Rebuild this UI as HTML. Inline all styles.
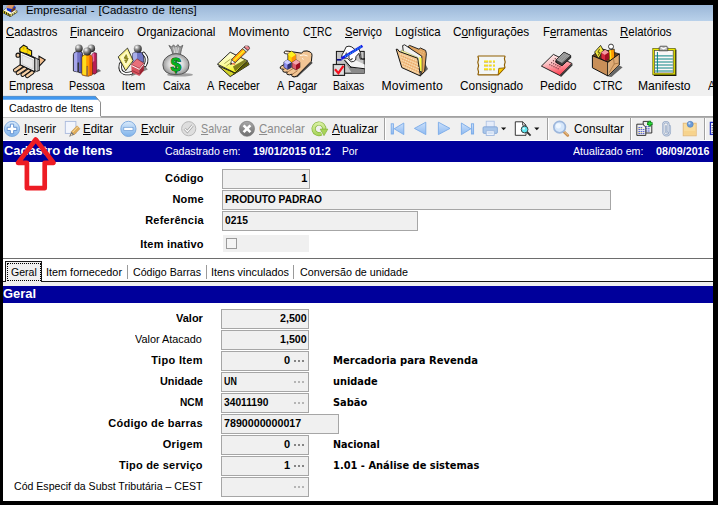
<!DOCTYPE html>
<html lang="pt-BR">
<head>
<meta charset="utf-8">
<title>Empresarial - [Cadastro de Itens]</title>
<style>
html,body{margin:0;padding:0;background:#000;}
body{width:718px;height:505px;overflow:hidden;position:relative;font-family:'Liberation Sans',sans-serif;}
#win{position:absolute;left:3px;top:5px;width:710px;height:496px;background:#fff;overflow:hidden;}
#page{position:absolute;left:-3px;top:-5px;width:718px;height:505px;}
.abs{position:absolute;}
.t{position:absolute;white-space:pre;line-height:16px;font-size:12px;color:#000;transform-origin:0 0;}
.t u{text-decoration:underline;text-underline-offset:1px;}
#title{left:3px;top:5px;width:710px;height:16px;background:linear-gradient(#9bb7d8,#b9d1ea);}
#menubar{left:3px;top:21px;width:710px;height:75px;background:#f0f0f0;}
#tabstrip{left:3px;top:96px;width:710px;height:21px;background:#fff;}
#tabline{left:100px;top:116px;width:613px;height:2px;background:linear-gradient(#a2a2a2 0,#a2a2a2 65%,#d0d0d0 100%);}
#tabline2{left:3px;top:117px;width:98px;height:1px;background:#c4c4c4;}
#tool2{left:3px;top:118px;width:710px;height:22px;background:#f0f0f0;}
.sep{position:absolute;top:118px;width:1px;height:22px;background:#a0a0a0;box-shadow:1px 0 0 #fff;}
.hdr{position:absolute;left:3px;width:710px;background:#00009b;}
.fld{position:absolute;box-sizing:border-box;height:20px;background:#f0f0f0;border:1px solid #a6a6a6;}
.dots{position:absolute;width:10px;height:2px;background:repeating-linear-gradient(90deg,#858585 0,#858585 2px,transparent 2px,transparent 4px);}
</style>
</head>
<body>
<div id="win"><div id="page">
<div class="abs" id="title"></div>
<div class="abs" id="menubar"></div>
<div class="abs" id="tabstrip"></div>
<div class="abs" id="tabline"></div>
<div class="abs" id="tabline2"></div>
<svg class="abs" style="left:0;top:90px" width="120" height="30" viewBox="0 90 120 30">
<polygon points="3,96 95.500,96 100.500,102 100.500,117 3,117" fill="#fff"/>
<polygon points="3,96 95.500,96 98.700,99.800 3,99.800" fill="#3f97f0"/>
<path d="M3,96.300H95.300" stroke="#6f8fb0" stroke-width="0.600" fill="none"/>
<path d="M95.300,96.200L100.500,102.200V116" stroke="#8c8c8c" stroke-width="1" fill="none"/>
</svg>
<div class="abs" id="tool2"></div>
<div class="sep" style="left:384px"></div>
<div class="sep" style="left:547px"></div>
<div class="sep" style="left:630px"></div>
<div class="sep" style="left:704px"></div>
<div class="hdr" style="top:141px;height:21px"></div>
<!-- top form -->
<div class="fld" style="left:222px;top:169px;width:88px"></div>
<div class="fld" style="left:222px;top:190px;width:389px"></div>
<div class="fld" style="left:222px;top:211px;width:196px"></div>
<div class="abs" style="left:223px;top:235px;width:86px;height:17px;background:#f0f0f0"></div>
<div class="abs" style="left:226px;top:238px;width:11px;height:11px;box-sizing:border-box;border:1px solid #9a9a9a;background:#f4f4f4"></div>
<!-- tab row -->
<div class="abs" style="left:3px;top:258px;width:710px;height:1px;background:#6d6d6d"></div>
<div class="abs" style="left:3px;top:282px;width:710px;height:4px;background:#f0f0f0"></div>
<div class="abs" style="left:3px;top:281px;width:710px;height:1px;background:#1a1a1a"></div>
<div class="abs" style="left:5px;top:261px;width:37px;height:21px;box-sizing:border-box;border:1px solid #1a1a1a;border-bottom:none;background:#f0f0f0"></div>
<div class="abs" style="left:7px;top:263px;width:34px;height:18px;box-sizing:border-box;border:1px dotted #000"></div>
<div class="abs" style="left:127px;top:265px;width:1px;height:14px;background:#9a9a9a"></div>
<div class="abs" style="left:206px;top:265px;width:1px;height:14px;background:#9a9a9a"></div>
<div class="abs" style="left:293px;top:265px;width:1px;height:14px;background:#9a9a9a"></div>
<div class="hdr" style="top:286px;height:17px"></div>
<!-- lower form -->
<div class="fld" style="left:221px;top:309px;width:88px"></div>
<div class="fld" style="left:221px;top:330px;width:88px"></div>
<div class="fld" style="left:221px;top:351px;width:88px"></div>
<div class="dots" style="left:294px;top:360px"></div>
<div class="fld" style="left:221px;top:372px;width:88px"></div>
<div class="dots" style="left:294px;top:381px;opacity:0.55"></div>
<div class="fld" style="left:221px;top:393px;width:88px"></div>
<div class="dots" style="left:294px;top:402px;opacity:0.55"></div>
<div class="fld" style="left:221px;top:414px;width:118px"></div>
<div class="fld" style="left:221px;top:435px;width:88px"></div>
<div class="dots" style="left:294px;top:444px"></div>
<div class="fld" style="left:221px;top:456px;width:88px"></div>
<div class="dots" style="left:294px;top:465px"></div>
<div class="fld" style="left:221px;top:477px;width:88px"></div>
<div class="dots" style="left:294px;top:486px;opacity:0.55"></div>

<span class="t" style="left:26.00px;top:1.88px;font-size:11.6px;word-spacing:0.8px;transform:scaleX(0.9843);">Empresarial - [Cadastro de Itens]</span>
<span class="t" style="left:6.30px;top:23.77px;font-size:12.2px;transform:scaleX(0.9235);"><u>C</u>adastros</span>
<span class="t" style="left:70.20px;top:23.77px;font-size:12.2px;transform:scaleX(0.9454);"><u>F</u>inanceiro</span>
<span class="t" style="left:137.30px;top:23.77px;font-size:12.2px;transform:scaleX(0.9631);">Organizacional</span>
<span class="t" style="left:228.40px;top:23.77px;font-size:12.2px;letter-spacing:0.161px;">Movimento</span>
<span class="t" style="left:302.80px;top:23.77px;font-size:12.2px;transform:scaleX(0.8535);">C<u>T</u>RC</span>
<span class="t" style="left:344.50px;top:23.77px;font-size:12.2px;transform:scaleX(0.9080);"><u>S</u>erviço</span>
<span class="t" style="left:394.70px;top:23.77px;font-size:12.2px;transform:scaleX(0.9348);">Logística</span>
<span class="t" style="left:453.30px;top:23.77px;font-size:12.2px;transform:scaleX(0.9695);">C<u>o</u>nfigurações</span>
<span class="t" style="left:542.50px;top:23.77px;font-size:12.2px;transform:scaleX(0.9335);">F<u>e</u>rramentas</span>
<span class="t" style="left:619.50px;top:23.77px;font-size:12.2px;transform:scaleX(0.9385);"><u>R</u>elatórios</span>
<span class="t" style="left:8.70px;top:77.77px;font-size:12.2px;transform:scaleX(0.9040);">Empresa</span>
<span class="t" style="left:69.00px;top:77.77px;font-size:12.2px;transform:scaleX(0.8806);">Pessoa</span>
<span class="t" style="left:121.50px;top:77.77px;font-size:12.2px;letter-spacing:0.066px;">Item</span>
<span class="t" style="left:163.40px;top:77.77px;font-size:12.2px;transform:scaleX(0.8694);">Caixa</span>
<span class="t" style="left:207.00px;top:77.77px;font-size:12.2px;word-spacing:1.6px;transform:scaleX(0.9005);">A Receber</span>
<span class="t" style="left:276.50px;top:77.77px;font-size:12.2px;word-spacing:1.6px;transform:scaleX(0.8916);">A Pagar</span>
<span class="t" style="left:333.40px;top:77.77px;font-size:12.2px;transform:scaleX(0.8526);">Baixas</span>
<span class="t" style="left:381.40px;top:77.77px;font-size:12.2px;letter-spacing:0.224px;">Movimento</span>
<span class="t" style="left:459.60px;top:77.77px;font-size:12.2px;transform:scaleX(0.9714);">Consignado</span>
<span class="t" style="left:539.50px;top:77.77px;font-size:12.2px;transform:scaleX(0.9617);">Pedido</span>
<span class="t" style="left:592.70px;top:77.77px;font-size:12.2px;transform:scaleX(0.8713);">CTRC</span>
<span class="t" style="left:638.30px;top:77.77px;font-size:12.2px;transform:scaleX(0.9954);">Manifesto</span>
<span class="t" style="left:707.60px;top:77.77px;font-size:12.2px;transform:scaleX(0.8980);">Ag</span>
<span class="t" style="left:8.50px;top:100.19px;font-size:11px;transform:scaleX(0.9707);">Cadastro de Itens</span>
<span class="t" style="left:24.00px;top:120.77px;font-size:12.2px;transform:scaleX(0.9446);"><u>I</u>nserir</span>
<span class="t" style="left:83.00px;top:120.77px;font-size:12.2px;transform:scaleX(0.9421);"><u>E</u>ditar</span>
<span class="t" style="left:140.50px;top:120.77px;font-size:12.2px;transform:scaleX(0.9158);"><u>E</u>xcluir</span>
<span class="t" style="left:201.30px;top:120.77px;font-size:12.2px;color:#8c8c8c;transform:scaleX(0.8829);"><u>S</u>alvar</span>
<span class="t" style="left:259.40px;top:120.77px;font-size:12.2px;color:#8c8c8c;transform:scaleX(0.9389);"><u>C</u>ancelar</span>
<span class="t" style="left:332.00px;top:120.77px;font-size:12.2px;transform:scaleX(0.9700);"><u>A</u>tualizar</span>
<span class="t" style="left:574.00px;top:120.77px;font-size:12.2px;transform:scaleX(0.9584);">Consultar</span>
<span class="t" style="left:3.50px;top:142.89px;font-size:13.3px;font-weight:700;color:#fff;transform:scaleX(0.9724);">Cadastro de Itens</span>
<span class="t" style="left:164.50px;top:143.19px;font-size:11px;color:#fff;transform:scaleX(0.9647);">Cadastrado em:</span>
<span class="t" style="left:253.40px;top:143.19px;font-size:11px;font-weight:700;color:#fff;transform:scaleX(0.9683);">19/01/2015 01:2</span>
<span class="t" style="left:342.00px;top:143.19px;font-size:11px;color:#fff;transform:scaleX(0.9343);">Por</span>
<span class="t" style="left:572.60px;top:143.19px;font-size:11px;color:#fff;transform:scaleX(0.9675);">Atualizado em:</span>
<span class="t" style="left:656.30px;top:143.19px;font-size:11px;font-weight:700;color:#fff;transform:scaleX(0.9716);">08/09/2016</span>
<span class="t" style="left:165.10px;top:170.49px;font-size:11px;font-weight:700;letter-spacing:0.122px;">Código</span>
<span class="t" style="left:172.40px;top:190.99px;font-size:11px;font-weight:700;letter-spacing:0.212px;">Nome</span>
<span class="t" style="left:145.20px;top:211.99px;font-size:11px;font-weight:700;letter-spacing:0.237px;">Referência</span>
<span class="t" style="left:140.20px;top:235.59px;font-size:11px;font-weight:700;letter-spacing:0.207px;">Item inativo</span>
<span class="t" style="left:301.18px;top:169.99px;font-size:11px;font-weight:700;">1</span>
<span class="t" style="left:224.70px;top:190.89px;font-size:11px;font-weight:700;transform:scaleX(0.9263);">PRODUTO PADRAO</span>
<span class="t" style="left:224.70px;top:212.09px;font-size:11px;font-weight:700;transform:scaleX(0.9353);">0215</span>
<span class="t" style="left:10.50px;top:263.69px;font-size:11px;transform:scaleX(0.9589);">Geral</span>
<span class="t" style="left:46.00px;top:263.69px;font-size:11px;transform:scaleX(0.9864);">Item fornecedor</span>
<span class="t" style="left:133.00px;top:263.69px;font-size:11px;transform:scaleX(0.9669);">Código Barras</span>
<span class="t" style="left:211.00px;top:263.69px;font-size:11px;transform:scaleX(0.9887);">Itens vinculados</span>
<span class="t" style="left:299.50px;top:263.69px;font-size:11px;transform:scaleX(0.9756);">Conversão de unidade</span>
<span class="t" style="left:3.40px;top:286.19px;font-size:13.3px;font-weight:700;color:#fff;transform:scaleX(0.9731);">Geral</span>
<span class="t" style="left:175.70px;top:310.09px;font-size:11px;font-weight:700;transform:scaleX(0.9998);">Valor</span>
<span class="t" style="left:135.20px;top:331.09px;font-size:11px;transform:scaleX(0.9869);">Valor Atacado</span>
<span class="t" style="left:151.20px;top:352.09px;font-size:11px;font-weight:700;letter-spacing:0.337px;">Tipo Item</span>
<span class="t" style="left:159.70px;top:373.09px;font-size:11px;font-weight:700;transform:scaleX(0.9883);">Unidade</span>
<span class="t" style="left:179.50px;top:394.09px;font-size:11px;font-weight:700;transform:scaleX(0.9217);">NCM</span>
<span class="t" style="left:108.30px;top:415.09px;font-size:11px;font-weight:700;letter-spacing:0.255px;">Código de barras</span>
<span class="t" style="left:162.80px;top:436.09px;font-size:11px;font-weight:700;letter-spacing:0.257px;">Origem</span>
<span class="t" style="left:119.00px;top:457.09px;font-size:11px;font-weight:700;letter-spacing:0.221px;">Tipo de serviço</span>
<span class="t" style="left:13.50px;top:478.09px;font-size:11px;transform:scaleX(0.9604);">Cód Especif da Subst Tributária – CEST</span>
<span class="t" style="left:280.10px;top:310.09px;font-size:11px;font-weight:700;transform:scaleX(0.9698);">2,500</span>
<span class="t" style="left:280.10px;top:331.09px;font-size:11px;font-weight:700;transform:scaleX(0.9698);">1,500</span>
<span class="t" style="left:283.88px;top:352.09px;font-size:11px;font-weight:700;">0</span>
<span class="t" style="left:223.50px;top:373.09px;font-size:11px;font-weight:700;transform:scaleX(0.8055);">UN</span>
<span class="t" style="left:223.50px;top:394.09px;font-size:11px;font-weight:700;transform:scaleX(0.9301);">34011190</span>
<span class="t" style="left:223.50px;top:415.09px;font-size:11px;font-weight:700;transform:scaleX(0.9707);">7890000000017</span>
<span class="t" style="left:283.88px;top:436.09px;font-size:11px;font-weight:700;">0</span>
<span class="t" style="left:283.88px;top:457.09px;font-size:11px;font-weight:700;">1</span>
<span class="t" style="left:333.40px;top:351.67px;font-size:10.5px;font-weight:700;font-family:'DejaVu Sans', 'Liberation Sans', sans-serif;transform:scaleX(0.9528);">Mercadoria para Revenda</span>
<span class="t" style="left:333.40px;top:372.67px;font-size:10.5px;font-weight:700;font-family:'DejaVu Sans', 'Liberation Sans', sans-serif;transform:scaleX(0.9331);">unidade</span>
<span class="t" style="left:333.40px;top:393.67px;font-size:10.5px;font-weight:700;font-family:'DejaVu Sans', 'Liberation Sans', sans-serif;transform:scaleX(0.9405);">Sabão</span>
<span class="t" style="left:333.40px;top:435.67px;font-size:10.5px;font-weight:700;font-family:'DejaVu Sans', 'Liberation Sans', sans-serif;transform:scaleX(0.9162);">Nacional</span>
<span class="t" style="left:333.40px;top:456.67px;font-size:10.5px;font-weight:700;font-family:'DejaVu Sans', 'Liberation Sans', sans-serif;transform:scaleX(0.9421);">1.01 - Análise de sistemas</span>
<svg class="abs" style="left:0;top:0" width="718" height="505" viewBox="0 0 718 505">
<defs>
<radialGradient id="gHead" cx="0.35" cy="0.3" r="0.8"><stop offset="0" stop-color="#fff"/><stop offset="0.4" stop-color="#8a8a8a"/><stop offset="1" stop-color="#111"/></radialGradient>
<radialGradient id="gBag" cx="0.5" cy="0.5" r="0.55"><stop offset="0" stop-color="#fffff4"/><stop offset="0.5" stop-color="#dcdcdc"/><stop offset="1" stop-color="#8a8a8a"/></radialGradient>
<linearGradient id="gBlueBtn" x1="0" y1="0" x2="0" y2="1"><stop offset="0" stop-color="#dcebfa"/><stop offset="0.5" stop-color="#a9cdf3"/><stop offset="1" stop-color="#7fb2ea"/></linearGradient>
<linearGradient id="gGrayBtn" x1="0" y1="0" x2="0" y2="1"><stop offset="0" stop-color="#a8a8a8"/><stop offset="1" stop-color="#6e6e6e"/></linearGradient>
<linearGradient id="gPink" x1="0" y1="0" x2="0.3" y2="1"><stop offset="0" stop-color="#fff4f4"/><stop offset="0.45" stop-color="#fbc4c6"/><stop offset="1" stop-color="#ff4a5a"/></linearGradient>
<linearGradient id="gNav" x1="0" y1="0" x2="0" y2="1"><stop offset="0" stop-color="#cfe2fa"/><stop offset="1" stop-color="#8cb9f2"/></linearGradient>
<linearGradient id="gPaper" x1="0.3" y1="0" x2="0.6" y2="1"><stop offset="0" stop-color="#ffffe0"/><stop offset="0.55" stop-color="#fbfb9a"/><stop offset="1" stop-color="#f2f200"/></linearGradient>
<linearGradient id="gGreen" gradientUnits="userSpaceOnUse" x1="0" y1="122" x2="0" y2="136"><stop offset="0" stop-color="#dcf2a8"/><stop offset="1" stop-color="#a4d254"/></linearGradient>
</defs>
<!-- title icon -->
<g>
<polygon points="3.200,10.300 7.500,7.300 17.300,10.600 17.300,12.400 10.500,17 3.200,13.200" fill="#222"/>
<polygon points="3.400,10.400 7.500,7.600 17,10.800 10.400,14.600" fill="#fffbd4"/>
<polygon points="3.400,10.600 10.300,14.400 10.500,16.600 3.400,12.900" fill="#f4e61a"/>
<path d="M4.600,11.300l0,2.300M6.400,12.300l0,2.300M8.200,13.200l0,2.400M9.900,14.200l0,2.300" stroke="#111" stroke-width="1"/>
<polygon points="10.500,14.600 17,10.900 16.800,12.200 10.600,16.600" fill="#f2ea7e"/>
<path d="M12.400,14l0,1.300M14.400,12.800l0,1.300" stroke="#333" stroke-width="0.800"/>
<polygon points="6.800,8.200 13.500,5 15.600,7 15.200,9.800 11.300,12.400 6.800,10.200" fill="#0a2ee6"/>
<polygon points="11.300,10 15.600,7 15.200,9.800 11.300,12.400" fill="#7a3a10"/>
<polygon points="6.300,6.200 8.500,5 14.300,5 12,9 7,8" fill="#d9986a"/>
<path d="M12,9l2.300,-4" stroke="#b87a20" stroke-width="0.800"/>
</g>
<!-- Empresa -->
<g>
<ellipse cx="18" cy="55.200" rx="2" ry="2.100" fill="#f6cfa4" stroke="#111" stroke-width="1.100"/>
<polygon points="39,56.300 45.200,59.800 39,66.400" fill="#f2bf8e" stroke="#111" stroke-width="1.100"/>
<g stroke="#f6cfa4" stroke-width="2.300" stroke-linecap="round">
<path d="M21.300,66l-6.200,4.300" stroke="#111" stroke-width="4.300"/><path d="M21.300,66l-6.200,4.300"/>
<path d="M25,68.200l-7.200,4.800" stroke="#111" stroke-width="4.300"/><path d="M25,68.200l-7.200,4.800"/>
<path d="M28.800,70.400l-6.200,4.300" stroke="#111" stroke-width="4.300"/><path d="M28.800,70.400l-6.200,4.300"/>
<path d="M32.400,72.200l-5.200,3.800" stroke="#111" stroke-width="4.300"/><path d="M32.400,72.200l-5.200,3.800"/>
</g>
<polygon points="19.800,48.400 23.600,45.200 27.200,47 27.200,48.600 31.600,50.800 31.600,57 19.800,52" fill="#ffdf0a" stroke="#111" stroke-width="1.100"/>
<path d="M23.600,46.600v3M27.600,49v3.600" stroke="#d8b000" stroke-width="1.600"/>
<polygon points="26,53.600 39.200,59.800 39.200,70.400 37,71.200 26,66" fill="#e4e4e4" stroke="#111" stroke-width="1.100"/>
<polygon points="23.400,52.600 37.200,59 37.200,71.600 23.400,65.400" fill="#f4f4f4" stroke="#444" stroke-width="0.700"/>
<polygon points="20.200,51.800 34.800,58.200 34.800,71.800 20.200,64.800" fill="#fff" stroke="#111" stroke-width="1.200"/>
<polygon points="22,54.800 33.200,59.800 33.200,69.200 22,64" fill="#e9e9e9" stroke="#bdbdbd" stroke-width="0.700"/>
</g>
<!-- Pessoa -->
<g>
<polygon points="88,76.600 101.200,71 98.600,69 92,72" fill="#555" opacity="0.800"/>
<path d="M92,54.400l2,-1.800l2.600,0.600l0.200,19.400l-2,1.600l-2.800,-1z" fill="#b81e54" stroke="#3a0a1c" stroke-width="0.600"/>
<path d="M92.200,54.400l2,-1.600l0,8l-2,2z" fill="#ee6aa0"/>
<path d="M73.400,54.600q0.200,-2.600,3,-3l4.400,0q1.600,0.200,1.600,2.400l0,19.200l-3.800,-0.800l0,-9.600l-0.800,0l0,9.200l-4.400,-1z" fill="#7373c6" stroke="#111" stroke-width="0.800"/>
<path d="M74,54.600q0.200,-2,2.200,-2.400l1,0l0,19.600l-3.200,-0.800z" fill="#a6a6ea"/>
<path d="M80.400,53.600l1.600,0.800l0,18.400l-1.600,-0.400z" fill="#4a4aa0"/>
<path d="M82,57.600q0.200,-2.600,3,-2.800l4.400,0q2.600,0.200,2.800,2.800l0,17.400l-4.600,1.400l0,-10l-1,0l0,9.800l-4.600,-1.200z" fill="#ff9c00" stroke="#5a2a00" stroke-width="0.600"/>
<path d="M82.400,57.600q0.200,-2.200,2.400,-2.400l1.400,0l0,20l-3.800,-1z" fill="#ffdc1e"/>
<path d="M89.400,55l2.400,1.600l0,18.400l-2.400,0.800z" fill="#f05a0a"/>
<circle cx="78.900" cy="48.400" r="3.800" fill="url(#gHead)"/>
<circle cx="91.300" cy="48.400" r="3.800" fill="url(#gHead)"/>
<circle cx="87.200" cy="51.400" r="4" fill="url(#gHead)"/>
</g>
<!-- Item -->
<g>
<polygon points="131,76.5 147.8,69.5 145,66 133,72" fill="#6a6a6a" opacity="0.8"/>
<path d="M132.8,53.2q5.2-2.6,10.6,0l0.4,9l-11.2,0z" fill="#6f76c4" stroke="#1a1a3a" stroke-width="0.7"/>
<path d="M133,53.4q2-1,4-1.3l0.2,10.1l-4.4,0z" fill="#a9aee8"/>
<path d="M143.600,53.400q5.400,5.600,1.400,12" fill="none" stroke="#111" stroke-width="3.400" stroke-linecap="round"/><path d="M143.600,53.400q5.400,5.600,1.400,12" fill="none" stroke="#fff" stroke-width="1.800" stroke-linecap="round"/>
<path d="M120.600,64q-1.800,7.400,4,9.400q3.400,0.600,7,-0.600" fill="none" stroke="#111" stroke-width="3.400" stroke-linecap="round"/><path d="M120.600,64q-1.800,7.400,4,9.400q3.400,0.600,7,-0.600" fill="none" stroke="#fff" stroke-width="1.800" stroke-linecap="round"/>
<circle cx="137.8" cy="48.8" r="4" fill="url(#gHead)"/>
<polygon points="118.2,56.9 127.5,48.1 133.2,60.7 125.7,70.7" fill="#faf38a" stroke="#111" stroke-width="0.8"/>
<polygon points="120.4,57.2 127,51 131.2,60.4 125.8,67.6" fill="#fffbc4"/>
<path d="M126.6,54.6l-1.8,3.4l2.8,0.8l-2,4M124,57.6l3.6,-0.6M124.4,60.6l3.6,-0.8" stroke="#8a8420" stroke-width="1.5" fill="none"/>
<polygon points="131.3,64.4 137,58.8 143.8,63.2 139.4,68.4" fill="#e8707a" stroke="#5a1018" stroke-width="0.5"/>
<polygon points="131.3,64.4 139.4,68.4 139.4,76 131.6,72.2" fill="#d8525e"/>
<polygon points="139.4,68.4 143.8,63.2 143.8,70.4 139.4,76" fill="#a82a38"/>
<path d="M131.6,65.6l7.8,3.8l4.2,-5" stroke="#fff" stroke-width="1" fill="none" opacity="0.9"/>
<path d="M131.8,70.4l7.6,3.6l4.2,-5.2" stroke="#7a1a24" stroke-width="0.6" fill="none"/>
</g>
<!-- Caixa -->
<g>
<ellipse cx="180" cy="74.800" rx="13" ry="1.800" fill="#8c8c8c" opacity="0.800"/>
<path d="M168.900,45.400l2.800,1.600l1.800,-2.200l2.200,2.400l2.200,-2.600l2,2.600l2.900,-2q-1.600,4,-2.400,9.400l-7.400,0q-1,-5.200,-4.100,-9.200z" fill="#9c9c9c" stroke="#555" stroke-width="0.800"/>
<path d="M173.600,47.500l1.200,5.500M176,47l0.200,6M178.400,47.600l-0.800,5.400" stroke="#e6e6e6" stroke-width="0.900" fill="none"/>
<path d="M172,54.200q4,-1,8,0q9,3.400,9,10.600q0,9.800,-13,9.800q-13.100,0,-13.100,-9.800q0,-7.200,9.100,-10.600z" fill="url(#gBag)" stroke="#555" stroke-width="1"/>
<text x="176" y="70.700" text-anchor="middle" font-family="'Liberation Sans',sans-serif" font-weight="700" font-size="18.500" fill="#06b41e" stroke="#053c0c" stroke-width="0.900" paint-order="stroke">$</text>
</g>
<!-- A Receber -->
<g>
<polygon points="218.500,66 230.200,76.600 249.200,64.600 247.500,61.500 235,73" fill="#d2d22a" stroke="#111" stroke-width="0.900"/>
<polygon points="232,71.500 247,62 248.800,64.600 234,74.400" fill="#5a5a08"/>
<polygon points="217.400,64.200 230.200,52.200 247.500,60.800 235,72.900" fill="url(#gPaper)" stroke="#111" stroke-width="0.900"/>
<polygon points="233,66.500 244.400,59.800 246.800,61 235.200,71.600" fill="#6a6a10" opacity="0.850"/>
<path d="M224.400,63.600l6,-4.400M226.400,66l5,-3.600" stroke="#8a8a30" stroke-width="0.700" fill="none"/>
<polygon points="230.600,64.400 231.600,59.400 235.400,62.600" fill="#f4f4f4" stroke="#222" stroke-width="0.600"/>
<polygon points="230.400,64.800 231,62.600 232.400,63.800" fill="#111"/>
<path d="M231.800,63.600l3.400,0.600" stroke="#f07a50" stroke-width="1.400"/>
<polygon points="231.600,59.400 242.400,48.600 246.400,52 235.400,62.600" fill="#ff9a10" stroke="#222" stroke-width="0.700"/>
<polygon points="232.900,60.400 243.700,49.700 245.100,50.900 234.200,61.600" fill="#ffe81e"/>
<polygon points="242.400,48.600 244,47 248,50.400 246.400,52" fill="#d8d8d8" stroke="#222" stroke-width="0.500"/>
<path d="M244,47q2.400,-2.600,4.800,-0.600q2,2,-0.800,4z" fill="#f08088" stroke="#222" stroke-width="0.700"/>
<path d="M245.400,46.400q1.200,-0.900,2.200,-0.500" stroke="#fff" stroke-width="0.900" fill="none"/>
</g>
<!-- A Pagar -->
<g>
<path d="M311.600,61.600l1,1.400l-15,14l-4.600,0.400z" fill="#4a4a4a"/>
<path d="M284.200,52q1,-1.600,4,-0.800l13.400,2l1.800,-2q4,-1,6.800,0.800q2,1.400,1.800,3.200l-0.600,6l-14.800,15q-2.400,1,-4.400,0.200q-1,-1,0,-2.200q-3,1.200,-5,0.200q-1,-1.200,0.200,-2.400q-2.800,0.800,-4.400,-0.400q-0.800,-1.400,0.600,-2.400q-2.600,0.200,-3.400,-1q-0.400,-1.600,1.600,-2.400l6.400,-3.400l0,-8.400l-3,-0.400q-1.600,-0.600,-1,-1.600z" fill="#f2c594" stroke="#111" stroke-width="1"/>
<path d="M283.500,69.600l6,-3.600M286.600,72.600l6.400,-4M291.600,74.800l6,-4.200" stroke="#a06a3c" stroke-width="0.800" fill="none"/>
<path d="M300,55.600q4,-1.600,7.600,0.400M302,58.400l1.600,1" stroke="#fff5e6" stroke-width="1" fill="none"/>
<path d="M285,52.400l2.600,0.400" stroke="#fff" stroke-width="1.200"/>
<polygon points="287.900,54.600 291.400,51.200 295.800,54.600 295.800,60.200 291.600,62.800 287.900,60" fill="#ffd200" stroke="#111" stroke-width="0.500"/>
<polygon points="291.600,57.400 295.800,54.600 295.800,60.200 291.600,62.800" fill="#ff9208"/>
<polygon points="287.900,54.600 291.400,51.200 295.800,54.600 291.600,57.400" fill="#fff21e"/>
<polygon points="283.800,62 287.400,59.800 291.300,62.200 291.300,67.400 287.400,69.600 283.800,67.200" fill="#8e8ef0" stroke="#111" stroke-width="0.500"/>
<polygon points="287.400,64.400 291.300,62.200 291.300,67.400 287.400,69.600" fill="#30306e"/>
<polygon points="283.800,62 287.400,59.800 291.300,62.200 287.400,64.400" fill="#ccccff"/>
<polygon points="292,62.400 296.200,59.800 300,62.200 300,67.600 296,70 292,67.600" fill="#dc5a6a" stroke="#111" stroke-width="0.500"/>
<polygon points="296,64.800 300,62.200 300,67.600 296,70" fill="#9c0e20"/>
<polygon points="292,62.400 296.200,59.800 300,62.200 296,64.800" fill="#f4a6ac"/>
</g>
<!-- Baixas -->
<g>
<rect x="336.400" y="51.400" width="27.800" height="21.800" fill="#c6c6c6" stroke="#111" stroke-width="1"/>
<polygon points="344,60.500 364.200,67 364.200,73.200 352,73.200" fill="#8a8a8a"/>
<polygon points="345,59 349,57 364.600,64.600 364.600,68.600 358,68.600 350,66.600" fill="#f4f4f4"/>
<path d="M350,67l14.600,1.800" stroke="#111" stroke-width="1.100" fill="none"/>
<path d="M344.400,60l7,7.600" stroke="#111" stroke-width="1" fill="none"/>
<path d="M341.600,56.600q0.400,-2.400,2,-4.400l2.600,-5.400q2.800,-1.400,5.600,0.200l4.200,3.400l2.800,-1.800l1.800,4.800l0.400,4.800q1.400,1.400,4,0.800l-4.600,0.200q-1,-3,-1.400,-6l-3,3.400l-0.400,3.400q-1.600,2,-4.400,1.800l-4,-3.600q-3.400,0.400,-5.600,-1.600z" fill="#fff" stroke="#111" stroke-width="0.900"/>
<path d="M346.400,52.600q-1.600,2.600,0.600,4.400M349,55.400q-1,3,1.600,4.600q1.600,0.200,1.600,-2" stroke="#111" stroke-width="0.900" fill="none"/>
<path d="M337,59.800l4.600,0" stroke="#0a0a8c" stroke-width="1.700"/>
<path d="M341.400,58.600l21,-12.800" stroke="#1414e6" stroke-width="2.700"/>
<path d="M345,56.600l17,-10.400" stroke="#22d8f0" stroke-width="1.200" stroke-dasharray="1 1"/>
<rect x="333.200" y="64.400" width="11.400" height="11" fill="#c2c2c2" stroke="#111" stroke-width="1"/>
<rect x="334.400" y="65.600" width="9" height="8.600" fill="#dedede"/>
<path d="M335,69.200l3.400,4l5,-7.400" stroke="#f4101e" stroke-width="2.200" fill="none"/>
</g>
<!-- Movimento -->
<g>
<polygon points="420.400,76.400 428,69 425.400,64 421,68" fill="#555" opacity="0.900"/>
<polygon points="408.200,46.400 409.600,45.400 419,49.200 420.400,48 425.600,50.400 426.400,53.600 424.600,71.400 421.400,74.600 418,56" fill="#dfa35e" stroke="#111" stroke-width="0.900"/>
<path d="M419.500,51l4.500,2M420,53.600l4.200,2" stroke="#f6d6a6" stroke-width="0.800" stroke-dasharray="1 1" fill="none"/>
<polygon points="402.600,45.600 404.600,44.800 421.800,56.200 421.800,72.400 404,58" fill="#f2f2f2" stroke="#111" stroke-width="0.900"/>
<polygon points="419.400,56.800 421.600,58.200 421.600,71.600 419.800,70" fill="#ffff3c"/>
<polygon points="401,50 418,57.400 420,70 403.600,60" fill="#ffffa8" stroke="#8a8a4a" stroke-width="0.400"/>
<polygon points="396.200,49.200 397.800,49.400 399,51.400 417.600,58.200 420.400,76 401.800,67.600" fill="#f3c58c" stroke="#111" stroke-width="1"/>
<path d="M400,54l17.600,7M400.600,57l17.600,7.400M401.400,60l17.400,7.600M402,63l17.200,7.800M402.800,66l16.800,7.800" stroke="#fbe6c4" stroke-width="1" stroke-dasharray="1 1" fill="none"/>
<path d="M400.300,55.500l17.600,7M401,58.500l17.600,7.400M401.700,61.500l17.400,7.600M402.400,64.500l17.200,7.800" stroke="#e79a58" stroke-width="0.900" stroke-dasharray="1 1" stroke-dashoffset="1" fill="none"/>
</g>
<!-- Consignado -->
<g>
<path d="M478.600,56l25.800,0q1,0,0.400,1.200q-0.800,1.600,0,3.200q0.800,1.600,0,3.200q-0.800,1.600,0,3.200l0,1l-6.600,7l-19.600,0q-1,0,-0.400,-1.200q0.800,-1.600,0,-3.200q-0.800,-1.600,0,-3.200q0.800,-1.600,0,-3.200q-0.800,-1.600,0,-3.200q0.800,-1.600,0,-3.200q-0.600,-1.600,0.400,-1.600z" fill="#f3f6f6" stroke="#8f5e00" stroke-width="1.200"/>
<polygon points="498.200,74.800 498.800,68.400 504.800,67.800" fill="#ffd000" stroke="#8f5e00" stroke-width="0.900"/>
<path d="M484,62h11M484,65.900h11M484,69.800h11" stroke="#a87a00" stroke-width="0.800" stroke-dasharray="4.200 0.900 2.500 1.400 2 1"/>
<path d="M484,61.200h11M484,65.100h11M484,69h11" stroke="#ffe600" stroke-width="1.300" stroke-dasharray="4.200 0.900 2.500 1.400 2 1"/>
</g>
<!-- Pedido -->
<g>
<polygon points="559.800,75.800 572.200,63.600 572.600,65.200 561,77" fill="#333"/>
<polygon points="541.400,66.100 553.400,54.400 571.900,63.400 559.800,75.500" fill="url(#gPink)" stroke="#111" stroke-width="0.900"/>
<path d="M549.400,64.600l10,4.800M551.200,62.600l10,4.800M553,60.600l6,2.800M554.800,58.600l3,1.400" stroke="#5a2a30" stroke-width="1.100" stroke-dasharray="1 1.300" fill="none"/>
<polygon points="556,60 564,52.200 570.700,55.500 570.700,57.800 562,65.800 556,62.400" fill="#3c3c3c" stroke="#111" stroke-width="0.900"/>
<polygon points="556,60 564,52.200 570.700,55.500 562,63.400" fill="#a2a2a2" stroke="#222" stroke-width="0.600"/>
<path d="M559,59.600l6.200,-6M560.800,60.600l6.200,-6M562.600,61.400l6.200,-6" stroke="#6e6e6e" stroke-width="0.800" stroke-dasharray="1 0.700"/>
</g>
<!-- CTRC -->
<g>
<polygon points="608,76.400 619.300,65.400 622.600,67.200 611.400,77" fill="#555" opacity="0.900"/>
<polygon points="592.400,55.700 601,48.600 619.300,53.900 608,62.200" fill="#6e4418" stroke="#111" stroke-width="0.800"/>
<polygon points="594.600,52 600.600,45.400 603.400,50.400 598.400,58.600" fill="#f4e840" stroke="#111" stroke-width="0.800"/>
<path d="M599.600,49l-1.600,3l1.600,0.800l-1.400,2.600" stroke="#6a6410" stroke-width="1.100" fill="none"/>
<polygon points="608.600,50.200 614.200,49 614.800,58.600 609.400,60.600" fill="#ff9a00" stroke="#111" stroke-width="0.700"/>
<polygon points="609.200,50.600 611,50.200 611.400,59.600 609.800,60.200" fill="#ffe61e"/>
<circle cx="611" cy="46.600" r="2.500" fill="#fff" stroke="#111" stroke-width="0.800"/>
<polygon points="601,52.600 605.200,49.800 609,52.200 609,58.400 605,61.200 601,58.600" fill="#d6283e" stroke="#111" stroke-width="0.600"/>
<polygon points="601,52.600 605.200,49.800 609,52.200 605,55" fill="#f49aa2"/>
<polygon points="605,55 609,52.200 609,58.400 605,61.200" fill="#a00e22"/>
<polygon points="592.400,55.700 608,62.200 608,76 592.400,67.800" fill="#c98f58" stroke="#111" stroke-width="1"/>
<polygon points="608,62.200 619.300,53.900 619.300,65 608,76" fill="#deaa74" stroke="#111" stroke-width="1"/>
<path d="M608.700,62.600l0,12.600" stroke="#f6d2a4" stroke-width="0.900"/>
<path d="M613.600,58.600l0.600,5.400l4.600,-1M614.200,64l-5,8.600" stroke="#9a6a3a" stroke-width="0.700" fill="none"/>
</g>
<!-- Manifesto -->
<g>
<rect x="653.800" y="49.600" width="22.600" height="26.400" fill="#111"/>
<rect x="652.800" y="48.600" width="22.400" height="26.200" fill="#ecec00" stroke="#5a5a00" stroke-width="0.700"/>
<rect x="654.600" y="50.600" width="18.600" height="22.400" fill="#fbf7f7" stroke="#444" stroke-width="0.700"/>
<path d="M655,55.900h17.800M655,59h17.800M655,62h17.800M655,65h17.800M655,68h17.800M655,71h17.800M657.400,52v20.600" stroke="#0a8484" stroke-width="1"/>
<path d="M659.200,50.800v-3.200l1,-1.400h6.600l1,1.400v3.200z" fill="#b8b8b8" stroke="#333" stroke-width="0.700"/>
<path d="M661,47.400l2.600,1.400l2.600,-1.400" stroke="#fff" stroke-width="1.100" fill="none"/>
</g>
<!-- small toolbar icons -->
<g>
<circle cx="12" cy="128.900" r="7.600" fill="url(#gBlueBtn)" stroke="#7aa7dc" stroke-width="0.900"/>
<path d="M10.400,124.100h3.200v3.200h3.200v3.200h-3.200v3.200h-3.200v-3.200h-3.200v-3.200h3.200z" fill="#fff" stroke="#5f8fd0" stroke-width="0.900"/>
</g>
<g>
<rect x="65.300" y="121.400" width="10.600" height="12" fill="#f2f5fc" stroke="#a9b9dc" stroke-width="0.900"/>
<polygon points="70.600,131.800 76.600,125.800 79.400,128.600 73.200,134.800 69.400,136.400" fill="#f0f0f0"/>
<polygon points="71.200,131.800 77,125.800 80,128.800 74.200,134.800" fill="#e0ac58" stroke="#b88a48" stroke-width="0.500"/>
<path d="M72.600,132.200l5.400,-5.600" stroke="#f8e2ac" stroke-width="1"/>
<polygon points="71.200,131.800 74.200,134.800 69.200,136.800" fill="#6a6a6a"/>
<polygon points="71.200,133.400 72.800,135 70.600,136" fill="#f0d8b0"/>
</g>
<g>
<circle cx="128.400" cy="128.900" r="7.600" fill="url(#gBlueBtn)" stroke="#7aa7dc" stroke-width="0.900"/>
<rect x="123.800" y="127.300" width="9.200" height="3.200" fill="#fff" stroke="#6d9bd4" stroke-width="0.700"/>
</g>
<g>
<circle cx="188.700" cy="128.700" r="7.100" fill="#dedede" stroke="#b2b2b2" stroke-width="0.900"/>
<path d="M184.600,128.600l2.800,3l5.200,-6.200" stroke="#9e9e9e" stroke-width="2.600" fill="none"/>
<path d="M184.600,128.600l2.800,3l5.200,-6.200" stroke="#fbfbfb" stroke-width="1.300" fill="none"/>
</g>
<g>
<circle cx="247" cy="128.800" r="7.500" fill="url(#gGrayBtn)" stroke="#7a7a7a" stroke-width="0.700"/>
<path d="M243.600,125.400l6.800,6.800M250.400,125.400l-6.800,6.800" stroke="#fff" stroke-width="2.600"/>
</g>
<g>
<path d="M324.200,129.400A5.300,5.300 0 1 0 321.400,133.500" fill="none" stroke="#86b43c" stroke-width="4.200"/>
<path d="M324.200,129.400A5.300,5.300 0 1 0 321.400,133.500" fill="none" stroke="url(#gGreen)" stroke-width="2.800"/>
<polygon points="320.200,129.100 327.800,129.100 324,135.600" fill="#a8d458" stroke="#86b43c" stroke-width="0.800"/>
</g>
<!-- nav -->
<g fill="url(#gNav)" stroke="#79aae8" stroke-width="0.900">
<rect x="391.200" y="123.800" width="2.200" height="10.200"/>
<polygon points="394.200,128.800 403.800,123 403.800,134.600"/>
<polygon points="414.400,128.400 425.800,122.200 425.800,134.600"/>
<polygon points="450,128.400 438.400,122.200 438.400,134.600"/>
<polygon points="470.800,128.800 461.400,123 461.400,134.600"/>
<rect x="471.400" y="123.800" width="2.200" height="10.200"/>
</g>
<!-- printer -->
<g>
<rect x="486.200" y="121.200" width="8" height="7" fill="#e6edfa" stroke="#a9bfe2" stroke-width="0.800"/>
<rect x="483" y="126.800" width="14.400" height="6.600" rx="1.200" fill="#a9c6ea" stroke="#7fa2d4" stroke-width="0.800"/>
<rect x="486.200" y="130.800" width="8" height="4.600" fill="#eef3fc" stroke="#9ab4dc" stroke-width="0.800"/>
<path d="M487.600,133h5.200" stroke="#a9c6ea" stroke-width="0.800"/>
<polygon points="501,127.400 506.200,127.400 503.600,130.200" fill="#111"/>
</g>
<!-- preview -->
<g>
<polygon points="515.300,121.800 522.600,121.800 526,125.200 526,135.300 515.300,135.300" fill="#fff" stroke="#222" stroke-width="0.900"/>
<path d="M522.600,121.800v3.400h3.400" fill="none" stroke="#222" stroke-width="0.800"/>
<path d="M527,132l3.600,3.600" stroke="#333" stroke-width="1.800"/>
<circle cx="524.600" cy="129.500" r="3.400" fill="#5ee6f2" stroke="#333" stroke-width="0.900"/>
<circle cx="523.800" cy="128.600" r="1.200" fill="#d8fbff"/>
<polygon points="534.200,127.400 539.400,127.400 536.800,130.200" fill="#111"/>
</g>
<!-- magnifier -->
<g>
<path d="M563.600,131.400l4.200,4" stroke="#c98f50" stroke-width="2.800" stroke-linecap="round"/>
<path d="M563.800,131.200l3.800,3.600" stroke="#efc890" stroke-width="1" stroke-linecap="round"/>
<circle cx="559.600" cy="127.100" r="5.800" fill="#d6e7fb" stroke="#9db7dc" stroke-width="1.700"/>
<circle cx="558.400" cy="125.800" r="2.600" fill="#f2f8ff" opacity="0.900"/>
</g>
<!-- copy icon -->
<g>
<polygon points="643.200,121.400 648.400,121.400 651.800,124.400 651.800,133 643.200,133" fill="#ececec" stroke="#222" stroke-width="0.900"/>
<path d="M645,126.600h5M645,128.800h5M645,131h5" stroke="#3a4ad0" stroke-width="0.900" stroke-dasharray="2 0.600"/>
<polygon points="636.800,124.200 642.600,124.200 645.800,127 645.800,135.400 636.800,135.400" fill="#f0f0f0" stroke="#222" stroke-width="0.900"/>
<path d="M638.400,127.600h4M638.400,129.600h6M638.400,131.600h6M638.400,133.600h6" stroke="#3a4ad0" stroke-width="0.900" stroke-dasharray="1.600 0.600"/>
<path d="M638.400,128.600h5M638.400,132.600h5" stroke="#e8d020" stroke-width="0.700" stroke-dasharray="1 1.400"/>
<path d="M649.800,120.800v5.600M647,123.600h5.600" stroke="#0a7a14" stroke-width="2.600"/>
<path d="M649.800,121.400v4.400M647.600,123.600h4.400" stroke="#2adc3a" stroke-width="1.300"/>
</g>
<!-- paperclip -->
<g fill="none" stroke-linecap="round">
<path d="M670,126.400v5.600a3.400,3.400 0 0 1 -6.800,0v-7.200a2.700,2.700 0 0 1 5.400,0v6.400a1.300,1.300 0 0 1 -2.600,0v-4.800" stroke="#94a6c2" stroke-width="2.100"/>
<path d="M670,126.400v5.600a3.400,3.400 0 0 1 -6.800,0v-7.200a2.700,2.700 0 0 1 5.400,0v6.400a1.300,1.300 0 0 1 -2.600,0v-4.800" stroke="#d4deec" stroke-width="0.900"/>
</g>
<!-- note -->
<g>
<rect x="683.200" y="123.200" width="13" height="12.600" fill="#f9dc9c" stroke="#e4b877" stroke-width="0.900"/>
<rect x="684.200" y="131" width="11" height="3.800" fill="#f6cf86" opacity="0.700"/>
<circle cx="690.200" cy="124.300" r="3" fill="#6b9bd8" stroke="#4a7abc" stroke-width="0.600"/>
<circle cx="689.400" cy="123.400" r="1.100" fill="#c6dcf6"/>
</g>
<!-- partial icon -->
<g>
<rect x="710.400" y="122.400" width="8" height="12" fill="#f4f4ff" stroke="#2230c4" stroke-width="1.300"/>
<path d="M711.600,125.400h3M711.600,127.800h3M711.600,130.200h3M711.600,132.400h3" stroke="#333" stroke-width="0.800"/>
</g>
<!-- red arrow -->
<path d="M35.700,139.500L53.500,162.800H44.700V188.200H26.900V162.800H18Z" fill="none" stroke="#ed1c24" stroke-width="4.700" stroke-linejoin="round"/>
</svg>

</div></div>
</body>
</html>
